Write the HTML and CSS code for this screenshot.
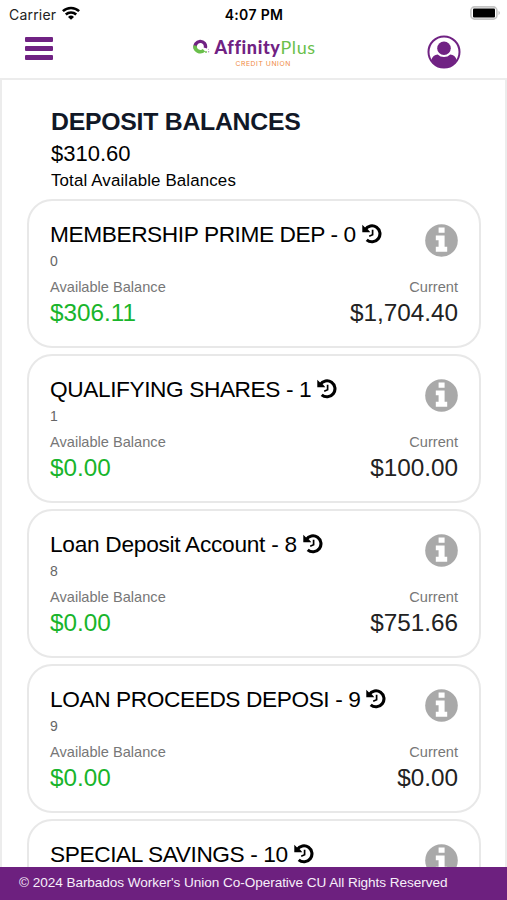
FILE: index.html
```html
<!DOCTYPE html>
<html lang="en">
<head>
<meta charset="utf-8">
<title>Deposit Balances</title>
<link rel="stylesheet" href="styles.css">
</head>
<body>
<svg class="defs" aria-hidden="true">
  <symbol id="history" viewBox="0 0 20 20">
    <path d="M3.2 5.5A8 8 0 1 1 4.7 15.8" fill="none" stroke="#000" stroke-width="3.1"/>
    <path d="M.3.8l2.5 2.4L6 5.6l2.3 2.6H.3z" fill="#000"/>
    <path d="M10.6 5.8v5L7.2 12.2" fill="none" stroke="#000" stroke-width="1.7"/>
  </symbol>
  <symbol id="info" viewBox="0 0 33 33">
    <circle cx="16.5" cy="16.5" r="16.3" fill="#a9a9a9"/>
    <path d="M13.6 3.6h6v5.2h-6zM10.8 11.4h8.8v11.4h2.6v4.9H10.8v-4.9h2.8v-6.5h-2.8z" fill="#fff"/>
  </symbol>
</svg>
<div class="screen">
  <div class="status">
    <div class="carrier"><span>Carrier</span>
      <svg class="wifi" viewBox="0 0 18 14"><g fill="none" stroke="#000" stroke-width="2.5"><path d="M.9 5.2a11.6 11.6 0 0 1 16.2 0"/><path d="M3.8 8.5a7.5 7.5 0 0 1 10.4 0"/></g><path d="M9 13.8 6 10.9a4.5 4.5 0 0 1 6 0z"/></svg>
    </div>
    <div class="time">4:07 PM</div>
    <svg class="battery" viewBox="0 0 31 14"><rect x=".9" y=".9" width="26" height="12.2" rx="3.6" fill="#fff" stroke="#c4c4c4" stroke-width="1.6"/><rect x="3" y="2.6" width="22" height="8.8" rx="1" fill="#000"/><path d="M28.6 4.8q2.2 2.2 0 4.4z" fill="#aaa"/></svg>
  </div>
  <header class="topbar">
    <div class="menu"><i></i><i></i><i></i></div>
    <div class="logo">
      <svg class="mark" viewBox="0 0 18 16"><path d="M2.5 9.5A5.2 5.2 0 1 1 12.3 9" fill="none" stroke="#702283" stroke-width="3.4"/><path d="M2.1 6.5A5.3 5.3 0 0 0 11 11.2" fill="none" stroke="#6abf4b" stroke-width="3.6"/><circle cx="13" cy="13" r=".9" fill="#6abf4b"/><circle cx="15.6" cy="12.8" r=".7" fill="#b08abb"/><circle cx="15.4" cy="10.3" r=".5" fill="#b08abb"/></svg>
      <div class="brand"><div class="name"><b>Affinity</b><span>Plus</span></div><div class="tag">CREDIT UNION</div></div>
    </div>
    <svg class="user" viewBox="0 0 34 34"><circle cx="17" cy="17" r="15.5" fill="#fff" stroke="#702283" stroke-width="2"/><circle cx="17" cy="13.3" r="6.8" fill="#702283"/><path d="M4.4 24.8C5.2 21.4 7.6 19.6 10.7 19.4a8.8 8.8 0 0 0 12.6 0c3.1.2 5.5 2 6.3 5.4A15 15 0 0 1 17 33 15 15 0 0 1 4.4 24.8z" fill="#702283"/></svg>
  </header>
  <main class="content">
    <section class="summary">
      <h1>DEPOSIT BALANCES</h1>
      <div class="total">$310.60</div>
      <div class="caption">Total Available Balances</div>
    </section>
    <section class="cards">
      <article class="card">
        <div class="heading"><h2>MEMBERSHIP PRIME DEP - 0</h2><svg class="history"><use href="#history"/></svg><svg class="info"><use href="#info"/></svg></div>
        <div class="number">0</div>
        <div class="labels"><span>Available Balance</span><span>Current</span></div>
        <div class="amounts"><span class="available">$306.11</span><span>$1,704.40</span></div>
      </article>
      <article class="card">
        <div class="heading"><h2>QUALIFYING SHARES - 1</h2><svg class="history"><use href="#history"/></svg><svg class="info"><use href="#info"/></svg></div>
        <div class="number">1</div>
        <div class="labels"><span>Available Balance</span><span>Current</span></div>
        <div class="amounts"><span class="available">$0.00</span><span>$100.00</span></div>
      </article>
      <article class="card">
        <div class="heading"><h2 class="mixed">Loan Deposit Account - 8</h2><svg class="history"><use href="#history"/></svg><svg class="info"><use href="#info"/></svg></div>
        <div class="number">8</div>
        <div class="labels"><span>Available Balance</span><span>Current</span></div>
        <div class="amounts"><span class="available">$0.00</span><span>$751.66</span></div>
      </article>
      <article class="card">
        <div class="heading"><h2>LOAN PROCEEDS DEPOSI - 9</h2><svg class="history"><use href="#history"/></svg><svg class="info"><use href="#info"/></svg></div>
        <div class="number">9</div>
        <div class="labels"><span>Available Balance</span><span>Current</span></div>
        <div class="amounts"><span class="available">$0.00</span><span>$0.00</span></div>
      </article>
      <article class="card">
        <div class="heading"><h2>SPECIAL SAVINGS - 10</h2><svg class="history"><use href="#history"/></svg><svg class="info"><use href="#info"/></svg></div>
      </article>
    </section>
  </main>
  <footer class="footer">© 2024 Barbados Worker's Union Co-Operative CU All Rights Reserved</footer>
</div>
</body>
</html>
```
FILE: styles.css
```css
* { box-sizing: border-box; }
body { margin: 0; background: #fff; color: #000; font-family: "Liberation Sans", Arial, sans-serif; font-kerning: normal; }
h1, h2 { margin: 0; }
svg { display: block; flex: none; }
.defs { display: none; }
.screen { width: 507px; height: 900px; display: flex; flex-direction: column; overflow: hidden; }

.status { height: 28px; flex: none; display: grid; grid-template-columns: 1fr auto 1fr; align-items: center; padding: 0 6px 0 9px; font-family: Inter, sans-serif; }
.carrier { display: flex; align-items: center; gap: 6px; font-size: 14px; letter-spacing: .2px; color: #222; }
.wifi { width: 18px; height: 14px; margin-top: -2px; }
.time { font-size: 14px; font-weight: 600; letter-spacing: .35px; margin-left: -2px; }
.battery { width: 31px; height: 14px; justify-self: end; margin-top: -2px; }

.topbar { height: 50px; flex: none; display: grid; grid-template-columns: 1fr auto 1fr; padding: 0 46px 0 25px; }
.menu { display: flex; flex-direction: column; gap: 4.5px; padding-top: 9px; }
.menu i { width: 28px; height: 4.7px; background: #702283; border-radius: 1px; }
.logo { display: flex; padding-top: 8px; margin-left: 23px; width: 124px; }
.mark { width: 18px; height: 16px; margin: 3px 4px 0 0; }
.name { font-family: Lato, sans-serif; font-size: 18px; line-height: 22px; white-space: nowrap; letter-spacing: .6px; color: #6abf4b; }
.name b { color: #702283; font-weight: 900; }
.name span { font-weight: 400; }
.tag { font-family: Inter, sans-serif; font-size: 6.8px; line-height: 7px; color: #f08a45; letter-spacing: .55px; margin: 2px 0 0 21px; white-space: nowrap; }
.user { width: 34px; height: 34px; justify-self: end; margin-top: 7px; }

.content { flex: 1; min-height: 0; overflow: hidden; border: 2px solid #ececec; border-bottom: 0; padding: 26px 24px 0 25px; }
.summary { padding-left: 24px; height: 93px; white-space: nowrap; }
.summary h1 { font-size: 24.8px; letter-spacing: -.25px; line-height: 32px; color: #111827; }
.total { font-size: 22px; line-height: 32px; }
.caption { font-size: 16.9px; letter-spacing: .13px; line-height: 22px; }
.cards { display: flex; flex-direction: column; gap: 6px; }
.card { height: 149.1px; flex: none; border: 2px solid #e8e8e8; border-radius: 25px; padding: 20px 21px 0 21px; }
.heading { height: 32px; display: flex; align-items: flex-start; }
.heading h2 { font-size: 22.7px; letter-spacing: -.41px; line-height: 26px; font-weight: 400; white-space: nowrap; }
.heading .mixed { letter-spacing: -.28px; }
.history { width: 20px; height: 20px; margin: 3px 0 0 6px; }
.info { width: 33px; height: 33px; margin: 3px 0 0 auto; }
.number { font-size: 14px; line-height: 17px; color: #666; }
.labels { display: flex; justify-content: space-between; font-size: 14.6px; line-height: 20px; color: #777; margin-top: 7px; }
.amounts { display: flex; justify-content: space-between; font-size: 24.3px; line-height: 32px; color: #222; }
.available { color: #18b52b; }

.footer { height: 33px; flex: none; background: #6d207f; color: #f7effa; font-size: 13.6px; letter-spacing: -.06px; line-height: 31px; padding-left: 19px; white-space: nowrap; }
```
